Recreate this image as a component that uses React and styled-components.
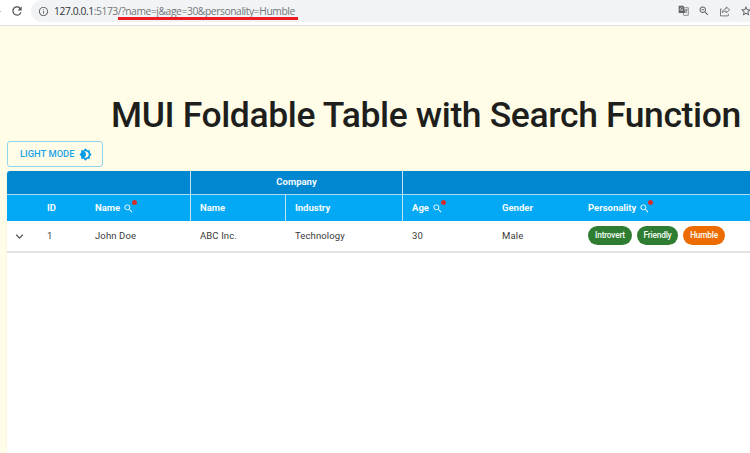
import React from "react";
import styled, { createGlobalStyle } from "styled-components";

const GlobalStyle = createGlobalStyle`
  * { box-sizing: border-box; }
  body { margin: 0; background: #fffde7; font-family: Roboto, sans-serif; overflow: hidden; }
`;

const Page = styled.div`
  width: 750px;
  height: 453px;
  overflow: hidden;
  display: flex;
  flex-direction: column;
`;

const BrowserBar = styled.header`
  height: 26px;
  flex: none;
  display: flex;
  background: #fff;
  border-bottom: 1px solid #dfe1e0;
`;

const NavButtons = styled.div`
  width: 31px;
  height: 22px;
  flex: none;
  display: flex;
  align-items: center;
  justify-content: space-between;
  padding-right: 7px;
  svg { display: block; flex: none; }
`;

const BackTip = styled.span`
  width: 1px;
  height: 1px;
  background: #b5b7b9;
`;

const AddressBar = styled.div`
  flex: 1;
  height: 22px;
  display: flex;
  align-items: center;
  padding-left: 7px;
  background: #f1f3f4;
  border-radius: 11px 0 0 11px;
  svg { display: block; flex: none; }
`;

const Address = styled.div`
  position: relative;
  margin-left: 5px;
  font: 400 10.3px/14px "Open Sans", sans-serif;
  letter-spacing: -0.42px;
  color: #73777b;
  white-space: nowrap;
`;

const Host = styled.span`
  color: #303236;
`;

const Underline = styled.span`
  position: absolute;
  left: 64px;
  top: 13px;
  width: 180px;
  height: 3px;
  background: #ed1c24;
`;

const AddressActions = styled.div`
  margin-left: auto;
  width: 72px;
  display: flex;
  gap: 9px;
`;

const Content = styled.main`
  flex: 1;
  display: flex;
  flex-direction: column;
  padding: 64px 0 0 7px;
  min-height: 0;
`;

const Title = styled.h1`
  margin: 0;
  padding-left: 104px;
  height: 51px;
  font-size: 35.5px;
  font-weight: 500;
  line-height: 51px;
  letter-spacing: -0.38px;
  color: #1e1e1c;
  white-space: nowrap;
`;

const ModeButton = styled.button`
  width: 96px;
  height: 26px;
  flex: none;
  display: flex;
  align-items: center;
  gap: 4px;
  padding: 0 0 0 12px;
  border: 1px solid #8fd5ee;
  border-radius: 3px;
  background: transparent;
  color: #1ba3e8;
  font: 500 9.4px/24px Roboto, sans-serif;
  letter-spacing: 0;
  white-space: nowrap;
  svg { display: block; flex: none; }
`;

const TablePaper = styled.section`
  flex: 1;
  width: 760px;
  margin-top: 4px;
  background: #fff;
  border-radius: 3px 0 0 0;
  overflow: hidden;
  box-shadow: 0 0 1px rgba(0, 0, 0, 0.25);
`;

const Row = styled.div`
  display: grid;
  grid-template-columns: ${(p) => p.$columns || "30px 48px 105px 95px 117px 90px 86px 1fr"};
  height: ${(p) => p.$height}px;
  background: ${(p) => p.$bg || "#fff"};
  border-bottom: ${(p) => p.$line || "0"};
`;

const Cell = styled.div`
  display: flex;
  align-items: center;
  justify-content: ${(p) => (p.$center ? "center" : "flex-start")};
  padding: 0 0 ${(p) => (p.$head ? 2 : 1)}px ${(p) => (p.$center ? 0 : 9)}px;
  border-left: 1px solid ${(p) => (p.$divided ? "#c5e3f2" : "transparent")};
  font-size: 9.5px;
  font-weight: ${(p) => (p.$head ? 700 : 400)};
  letter-spacing: ${(p) => (p.$head ? "0" : "0.12px")};
  color: ${(p) => (p.$head ? "#f4fbff" : "#3a3a3a")};
  white-space: nowrap;
  svg { display: block; flex: none; }
`;

const ExpandCell = styled.div`
  display: flex;
  align-items: center;
  padding-left: 5px;
`;

const SearchBadge = styled.span`
  position: relative;
  margin-left: 3px;
  margin-top: 2px;
`;

const Dot = styled.span`
  position: absolute;
  right: -3px;
  top: -3px;
  width: 5px;
  height: 5px;
  border-radius: 50%;
  background: #d32f2f;
`;

const Chips = styled.div`
  display: flex;
  gap: 5px;
`;

const Chip = styled.span`
  width: ${(p) => p.$width}px;
  height: 19px;
  border-radius: 10px;
  background: ${(p) => (p.$warm ? "#ed6c02" : "#2e7d32")};
  color: #f8fcf8;
  font-size: 8.3px;
  font-weight: 500;
  line-height: 18px;
  letter-spacing: -0.2px;
  text-align: center;
`;

const Glyph = ({ size, color, d }) => (
  <svg width={size} height={size} viewBox="0 0 24 24" fill={color}>
    <path d={d} />
  </svg>
);

const paths = {
  reload:
    "M17.65 6.35C16.2 4.9 14.21 4 12 4c-4.42 0-7.99 3.58-7.99 8s3.57 8 7.99 8c3.73 0 6.84-2.55 7.73-6h-2.08c-.82 2.33-3.04 4-5.65 4-3.31 0-6-2.69-6-6s2.69-6 6-6c1.66 0 3.14.69 4.22 1.78L13 11h7V4l-2.35 2.35z",
  info:
    "M11 7h2v2h-2zm0 4h2v6h-2zm1-9C6.48 2 2 6.48 2 12s4.48 10 10 10 10-4.48 10-10S17.52 2 12 2zm0 18c-4.41 0-8-3.59-8-8s3.59-8 8-8 8 3.59 8 8-3.59 8-8 8z",
  search:
    "M15.5 14h-.79l-.28-.27C15.41 12.59 16 11.11 16 9.5 16 5.91 13.09 3 9.5 3S3 5.91 3 9.5 5.91 16 9.5 16c1.61 0 3.09-.59 4.23-1.57l.27.28v.79l5 4.99L20.49 19l-4.99-5zm-6 0C7.01 14 5 11.99 5 9.5S7.01 5 9.5 5 14 7.01 14 9.5 11.99 14 9.5 14z",
  zoomOut:
    "M15.5 14h-.79l-.28-.27C15.41 12.59 16 11.11 16 9.5 16 5.91 13.09 3 9.5 3S3 5.91 3 9.5 5.91 16 9.5 16c1.61 0 3.09-.59 4.23-1.57l.27.28v.79l5 4.99L20.49 19l-4.99-5zm-6 0C7.01 14 5 11.99 5 9.5S7.01 5 9.5 5 14 7.01 14 9.5 11.99 14 9.5 14zM7 8.5h5v2H7z",
  star:
    "M22 9.24l-7.19-.62L12 2 9.19 8.63 2 9.24l5.46 4.73L5.82 21 12 17.27 18.18 21l-1.63-7.03L22 9.24zM12 15.4l-3.76 2.27 1-4.28-3.32-2.88 4.38-.38L12 6.1l1.71 4.04 4.38.38-3.32 2.88 1 4.28L12 15.4z",
  brightness:
    "M20 8.69V4h-4.69L12 .69 8.69 4H4v4.69L.69 12 4 15.31V20h4.69L12 23.31 15.31 20H20v-4.69L23.31 12 20 8.69zM12 18c-.89 0-1.74-.2-2.5-.55C11.56 16.5 13 14.42 13 12s-1.44-4.5-3.5-5.45C10.26 6.2 11.11 6 12 6c3.31 0 6 2.69 6 6s-2.69 6-6 6z",
  chevron: "M16.59 8.59L12 13.17 7.41 8.59 6 10l6 6 6-6z",
};

const TranslateIcon = () => (
  <svg width="11" height="11" viewBox="0 0 11 11" fill="none">
    <path d="M5 2.7h5.3v7.6H5.8L5 8" stroke="#777b7f" strokeWidth=".8" />
    <path d="M.7.7h4.8L7.4 8H.7z" fill="#5f6368" />
    <path d="M4.6 3.1A1.4 1.4 0 1 0 4.8 4.8H3.5" stroke="#f1f3f4" strokeWidth=".7" />
    <path d="M6.5 4.8h3.1M8 4v.8M9 4.8C8.8 6 7.9 6.9 7 7.3M7.2 5.6c.4.8 1.1 1.5 2 2" stroke="#5f6368" strokeWidth=".7" />
  </svg>
);

const ShareIcon = () => (
  <svg width="12" height="12" viewBox="0 0 12 12" fill="none" stroke="#6b6f73" strokeWidth=".9">
    <path d="M2.8 4H1.5v6.9h7.8V8.8" />
    <path d="M3.2 7.8C3.6 5.4 5 3.9 7.2 3.7V1.8l3.5 3.1-3.5 3V6.1C5.4 6.1 4.2 6.6 3.2 7.8z" />
  </svg>
);

const SearchMark = () => (
  <SearchBadge>
    <Glyph size={11} color="#fff" d={paths.search} />
    <Dot />
  </SearchBadge>
);

export default function App() {
  return (
    <>
      <GlobalStyle />
      <Page>
        <BrowserBar>
          <NavButtons>
            <BackTip />
            <Glyph size={14} color="#505357" d={paths.reload} />
          </NavButtons>
          <AddressBar>
            <Glyph size={11} color="#5f6368" d={paths.info} />
            <Address>
              <Host>127.0.0.1</Host>:5173/?name=j&amp;age=30&amp;personality=Humble
              <Underline />
            </Address>
            <AddressActions>
              <TranslateIcon />
              <Glyph size={12} color="#5f6368" d={paths.zoomOut} />
              <ShareIcon />
              <Glyph size={12} color="#505357" d={paths.star} />
            </AddressActions>
          </AddressBar>
        </BrowserBar>
        <Content>
          <Title>MUI Foldable Table with Search Function</Title>
          <ModeButton>
            LIGHT MODE
            <Glyph size={13} color="#039be5" d={paths.brightness} />
          </ModeButton>
          <TablePaper>
            <Row $columns="183px 212px 1fr" $height={24} $bg="#0288d1" $line="1px solid #b3d9ee">
              <Cell />
              <Cell $head $center $divided>Company</Cell>
              <Cell $divided />
            </Row>
            <Row $height={26} $bg="#03a9f4">
              <Cell />
              <Cell $head>ID</Cell>
              <Cell $head>Name<SearchMark /></Cell>
              <Cell $head $divided>Name</Cell>
              <Cell $head $divided>Industry</Cell>
              <Cell $head $divided>Age<SearchMark /></Cell>
              <Cell $head>Gender</Cell>
              <Cell $head>Personality<SearchMark /></Cell>
            </Row>
            <Row $height={32} $line="2px solid #e2e2e2">
              <ExpandCell><Glyph size={15} color="#555" d={paths.chevron} /></ExpandCell>
              <Cell>1</Cell>
              <Cell>John Doe</Cell>
              <Cell>ABC Inc.</Cell>
              <Cell>Technology</Cell>
              <Cell>30</Cell>
              <Cell>Male</Cell>
              <Cell>
                <Chips>
                  <Chip $width={44}>Introvert</Chip>
                  <Chip $width={41}>Friendly</Chip>
                  <Chip $width={42} $warm>Humble</Chip>
                </Chips>
              </Cell>
            </Row>
          </TablePaper>
        </Content>
      </Page>
    </>
  );
}
